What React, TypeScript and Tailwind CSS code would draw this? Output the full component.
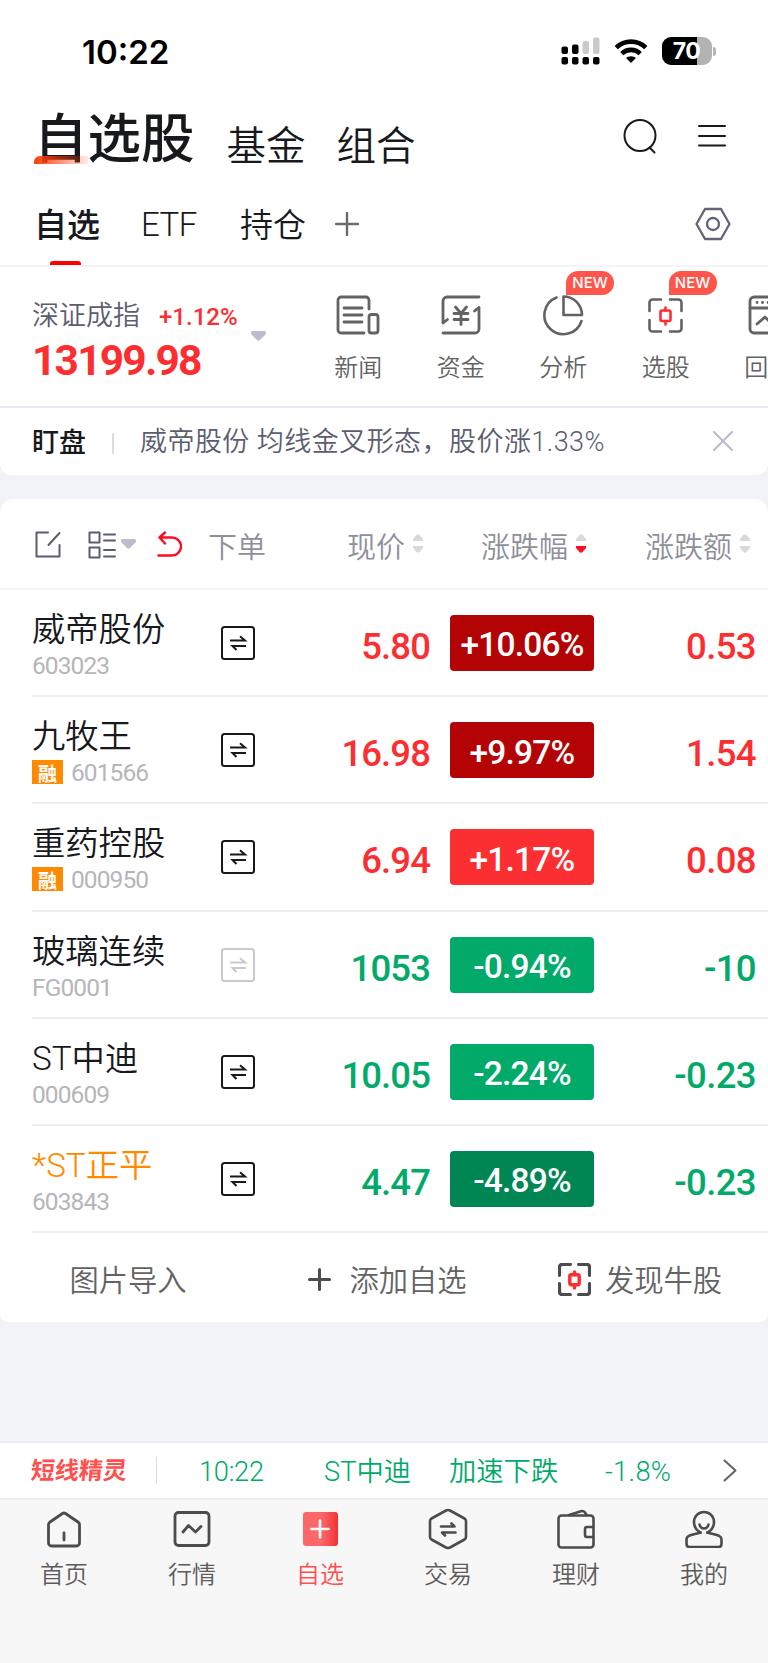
import type { ReactNode } from "react";
import clsx from "clsx";

type Stock = {
  name: string;
  code: string;
  margin?: boolean;
  st?: boolean;
  locked?: boolean;
  price: string;
  percent: string;
  change: string;
  color: string;
  badge: string;
};

const num = "font-['Roboto','Noto_Sans_CJK_SC',sans-serif]";

const stocks: Stock[] = [
  { name: "威帝股份", code: "603023", price: "5.80", percent: "+10.06%", change: "0.53", color: "text-[#fb2f31]", badge: "bg-[#b40304]" },
  { name: "九牧王", code: "601566", margin: true, price: "16.98", percent: "+9.97%", change: "1.54", color: "text-[#fb2f31]", badge: "bg-[#b40304]" },
  { name: "重药控股", code: "000950", margin: true, price: "6.94", percent: "+1.17%", change: "0.08", color: "text-[#fb2f31]", badge: "bg-[#fb2f31]" },
  { name: "玻璃连续", code: "FG0001", locked: true, price: "1053", percent: "-0.94%", change: "-10", color: "text-[#02aa6a]", badge: "bg-[#02aa6a]" },
  { name: "ST中迪", code: "000609", price: "10.05", percent: "-2.24%", change: "-0.23", color: "text-[#02aa6a]", badge: "bg-[#02aa6a]" },
  { name: "*ST正平", code: "603843", st: true, price: "4.47", percent: "-4.89%", change: "-0.23", color: "text-[#02aa6a]", badge: "bg-[#008653]" },
];

function Svg({ w, h, sw = 2, className, children }: { w: number; h: number; sw?: number; className?: string; children: ReactNode }) {
  return (
    <svg
      width={w}
      height={h}
      viewBox={`0 0 ${w} ${h}`}
      fill="none"
      stroke="currentColor"
      strokeWidth={sw}
      strokeLinecap="round"
      strokeLinejoin="round"
      className={clsx("block shrink-0", className)}
    >
      {children}
    </svg>
  );
}

function StatusBar() {
  return (
    <div className="flex h-[102px] items-center pl-[82px] pr-[52px]">
      <span className="mt-[2px] font-['Inter',sans-serif] text-[33px] leading-none font-semibold text-black">10:22</span>
      <div className="ml-auto flex items-center">
        <Svg w={39} h={28} className="text-black">
          <g fill="#000" stroke="none">
            <rect x="0.5" y="9.5" width="6.5" height="7.5" rx="2" />
            <rect x="11" y="7.5" width="6.5" height="9.5" rx="2" />
            <rect x="21.5" y="4" width="6.5" height="13" rx="2" fill="#cacaca" />
            <rect x="32" y="0.5" width="6.5" height="16.5" rx="2" fill="#cacaca" />
            <rect x="0.5" y="20" width="6.5" height="7.5" rx="2" />
            <rect x="11" y="20" width="6.5" height="7.5" rx="2" />
            <rect x="21.5" y="20" width="6.5" height="7.5" rx="2" />
            <rect x="32" y="20" width="6.5" height="7.5" rx="2" />
          </g>
        </Svg>
        <Svg w={34} h={25} className="ml-[14px] text-black" sw={4.6}>
          <g strokeLinecap="butt">
            <path d="M2.2 8.6 A 21.3 21.3 0 0 1 31.8 8.6" />
            <path d="M7.8 14.6 A 13.3 13.3 0 0 1 26.2 14.6" />
          </g>
          <path d="M17 17.2c-2 0-3.700.7-4.900 1.900l4.900 4.900 4.900-4.900c-1.200-1.200-2.900-1.900-4.900-1.900z" fill="#000" stroke="none" />
        </Svg>
        <div className="ml-[14px] flex h-[28px] w-[50px] items-center justify-center rounded-[9px] bg-[linear-gradient(90deg,#000_35px,#b3b3b3_35px)] pr-[1px] font-['Inter',sans-serif] text-[23px] font-bold tracking-[-0.5px] text-white">
          70
        </div>
        <div className="ml-[1px] h-[9px] w-[3px] rounded-r-full bg-[#b3b3b3]" />
      </div>
    </div>
  );
}

function Header() {
  return (
    <div className="flex h-[83px] items-start pl-[34px] text-[#18191d]">
      <h1 className="relative mt-px text-[53.5px] leading-[64px] font-medium">
        自选股
        <span className="absolute top-[53px] left-0 h-[8px] w-[54px] rounded-tl-[6px] bg-linear-to-r from-[#ff3a06] to-[#ff3a06]/10" />
      </h1>
      <span className="mt-[14px] ml-[32px] text-[39.5px] leading-[54px] font-[350]">基金</span>
      <span className="mt-[14px] ml-[31px] text-[39.5px] leading-[54px] font-[350]">组合</span>
      <Svg w={36} h={37} className="mt-[16px] ml-auto">
        <circle cx="17" cy="17.500" r="15.500" />
        <path d="M26.500 29.500l5 5" />
      </Svg>
      <Svg w={28} h={24} className="mt-[22px] mr-[42px] ml-[39px]">
        <path d="M1 2h26M1 12h26M1 21.500h26" />
      </Svg>
    </div>
  );
}

function Tabs() {
  return (
    <div className="flex h-[82px] items-center border-b-2 border-[#f4f4f6] pl-[34px] text-[33px] text-[#18191d]">
      <div className="relative flex h-full items-center pb-[3px] font-medium">
        自选
        <span className="absolute bottom-0 left-[16px] h-[4px] w-[31px] rounded-t-[3px] bg-[#fc0000]" />
      </div>
      <span className={clsx(num, "ml-[41px] font-[350] tracking-[-0.5px]")}>ETF</span>
      <span className="mb-[3px] ml-[43px] font-[350]">持仓</span>
      <Svg w={24} h={24} className="mb-[2px] ml-[29px] text-[#6b6b6b]" sw={2.4}>
        <path d="M12 1v22M1 12h22" />
      </Svg>
      <Svg w={36} h={34} className="mr-[37px] mb-[2px] ml-auto text-[#62647a]" sw={2.3}>
        <path d="M10 2h16l8.500 15L26 32H10L1.500 17z" />
        <circle cx="18" cy="17" r="6" />
      </Svg>
    </div>
  );
}

const scan = (
  <>
    <path d="M1.500 13V4.500a3 3 0 0 1 3-3H13M22 1.500h8.500a3 3 0 0 1 3 3V13M33.500 22v8.500a3 3 0 0 1-3 3H22M13 33.500H4.500a3 3 0 0 1-3-3V22" />
    <g stroke="#fb2f31">
      <rect x="12.500" y="12.500" width="10" height="10.500" rx="1.500" />
      <path d="M17.500 9.500v3M17.500 23v3.500" />
    </g>
  </>
);

const shortcuts: { label: string; isNew?: boolean; icon: ReactNode }[] = [
  {
    label: "新闻",
    icon: (
      <Svg w={44} h={40} sw={2.8}>
        <path d="M33 14V5a3 3 0 0 0-3-3H5a3 3 0 0 0-3 3v30a3 3 0 0 0 3 3h23M8 13h18M8 20h18M8 27h18" />
        <rect x="33" y="19.500" width="9" height="18.500" rx="2.500" />
      </Svg>
    ),
  },
  {
    label: "资金",
    icon: (
      <Svg w={40} h={40} sw={2.8}>
        <path d="M38 2H6a4 4 0 0 0-4 4v22l4.500-3.500M2 38h32a4 4 0 0 0 4-4V12.500L33.500 16" />
        <path d="M14.500 12l5.500 6.500L25.500 12M13 18.500h14M13 24.500h14M20 19v10.500" />
      </Svg>
    ),
  },
  {
    label: "分析",
    isNew: true,
    icon: (
      <Svg w={42} h={42} sw={2.6}>
        <path d="M14.500 3.500A19 19 0 1 0 39.500 27" />
        <path d="M21.500 2.500v18.500H40A18.500 18.500 0 0 0 21.500 2.500z" />
      </Svg>
    ),
  },
  { label: "选股", isNew: true, icon: <Svg w={35} h={35} sw={2.6}>{scan}</Svg> },
  {
    label: "回测",
    icon: (
      <Svg w={40} h={40} sw={2.8}>
        <rect x="2" y="2" width="36" height="36" rx="4" />
        <path d="M2 13h36M9 29l8-7 6 6 8-9" />
        <path d="M9 7.500h.1M14.500 7.500h.1M20 7.500h.1" />
      </Svg>
    ),
  },
];

function IndexBar() {
  return (
    <div className="flex h-[141px] overflow-hidden border-b-2 border-[#e8e9f2]">
      <div className="w-[307px] shrink-0 pt-[31px] pl-[32px]">
        <div className="flex h-[32px] items-center">
          <span className="text-[27px] leading-[32px] font-[350] text-[#5c5d70]">深证成指</span>
          <span className={clsx(num, "mt-[6px] ml-[19px] text-[24px] font-medium text-[#fb2f31]")}>+1.12%</span>
        </div>
        <div className="flex">
          <span className={clsx(num, "mt-[7px] w-[219px] text-[42.500px] leading-[48px] font-bold tracking-[-1.8px] text-[#fb2f31]")}>13199.98</span>
          <div className="mt-px">
            <Caret />
          </div>
        </div>
      </div>
      {shortcuts.map((s) => (
        <div key={s.label} className="relative flex w-[102.5px] shrink-0 flex-col items-center text-[#636363]">
          <div className="mt-[27px] flex h-[42px] items-center">{s.icon}</div>
          {s.isNew && (
            <span className="absolute top-[4px] left-[54px] flex h-[24px] w-[48px] items-center justify-center rounded-[12px] rounded-bl-none bg-[#ff564c] font-['Inter',sans-serif] text-[15px] font-medium text-white">
              NEW
            </span>
          )}
          <span className="mt-[14px] text-[24px] leading-[32px] font-[350]">{s.label}</span>
        </div>
      ))}
    </div>
  );
}

function Caret() {
  return (
    <svg width="15" height="10" viewBox="0 0 15 10" className="block shrink-0 fill-[#bbbccc]">
      <path d="M1.500 0h12q1.500 0 1.500 1.500v1.500L9 9q-1.500 1.300-3 0L0 3V1.500Q0 0 1.500 0z" />
    </svg>
  );
}

function Notice() {
  return (
    <div className="flex h-[67px] items-center pr-[35px] pb-px pl-[32px] text-[27px]">
      <span className="font-medium text-[#18191d]">盯盘</span>
      <span className="mt-[5px] ml-[26px] h-[21px] w-[2px] bg-[#dcdce2]" />
      <span className={clsx(num, "mt-[3px] ml-[26px] font-[350] tracking-[0.45px] text-[#5c5d70]")}>威帝股份 均线金叉形态，股价涨1.33%</span>
      <Svg w={20} h={20} className="ml-auto text-[#b9bacb]">
        <path d="M1 1l18 18M19 1L1 19" />
      </Svg>
    </div>
  );
}

function Sorter({ active }: { active?: boolean }) {
  return (
    <svg width="10" height="19" viewBox="0 0 10 19" className="ml-[8px] block">
      <path d="M0 7V5l3.500-4q1.500-1.500 3 0L10 5v2z" fill="#d9d9dc" />
      <path d="M0 12v2l3.500 4q1.500 1.300 3 0L10 14v-2z" fill={active ? "#fc0d22" : "#d9d9dc"} />
    </svg>
  );
}

function TableHead() {
  return (
    <div className="flex h-[91px] items-center border-b-2 border-[#f1f2f7] pr-[18px] pl-[35px] text-[29px] font-[350] text-[#8e8f9b]">
      <Svg w={26} h={27} className="mt-[2px] text-[#5c5d70]">
        <path d="M13 1.500H1.500V25.500H24.500V14M13.500 14L24.500 2" />
      </Svg>
      <Svg w={28} h={28} className="mt-[2px] ml-[27px] text-[#5c5d70]">
        <path d="M1.500 1.500h10v10h-10zM1.500 16.500h10v10h-10zM16 3.500h11M16 9.500h11M16 19h11M16 25.500h11" />
      </Svg>
      <div className="ml-[5px]">
        <Caret />
      </div>
      <Svg w={25} h={27} className="mt-[2px] ml-[21px] text-[#fc0d22]" sw={2.4}>
        <path d="M1.500 24.500H15a9 9 0 0 0 0-18H2.500M8 1.500l-5.500 5 5.500 6" />
      </Svg>
      <span className="mt-[4px] ml-[26px] w-[139px]">下单</span>
      <span className="mt-[4px]">现价</span>
      <Sorter />
      <span className="mt-[4px] ml-[58px]">涨跌幅</span>
      <Sorter active />
      <span className="mt-[4px] ml-auto">涨跌额</span>
      <Sorter />
    </div>
  );
}

function StockRow({ stock }: { stock: Stock }) {
  return (
    <div className="ml-[32px] flex h-[107.200px] border-b-2 border-[#edeef4]">
      <div className="w-[189px]">
        <div className={clsx(num, "mt-[19px] text-[33.300px] leading-[42px] font-[350]", stock.st ? "text-[#ff8a00]" : "text-[#18191d]")}>{stock.name}</div>
        <div className="mt-[2px] flex h-[24px] items-center">
          {stock.margin && (
            <span className="mr-[8px] flex h-[24px] w-[31px] items-center justify-center bg-[#ff8a00] text-[19px] leading-none font-bold text-white">融</span>
          )}
          <span className={clsx(num, "pt-[2px] text-[24.500px] leading-[24px] tracking-[-0.9px] text-[#b5b6ba]")}>{stock.code}</span>
        </div>
      </div>
      <Svg w={34} h={34} className={clsx("mt-[36px]", stock.locked ? "text-[#c9c9d6]" : "text-[#18191d]")}>
        <rect x="1" y="1" width="32" height="32" rx="2.500" />
        <g strokeLinecap="butt" strokeLinejoin="miter">
          <path d="M9 14.500h15l-5-4.300M25 20H11.500l4 4" />
        </g>
      </Svg>
      <span className={clsx(num, "mt-[34px] w-[175px] text-right text-[36.500px] leading-[46px] font-medium tracking-[-0.9px]", stock.color)}>{stock.price}</span>
      <div className={clsx(num, "mt-[25px] ml-[20px] flex h-[56px] w-[144px] items-center justify-center rounded-[4px] pt-[5px] text-[33.500px] font-medium tracking-[-0.8px] text-white", stock.badge)}>
        {stock.percent}
      </div>
      <span className={clsx(num, "mt-[34px] w-[162px] text-right text-[36.500px] leading-[46px] font-medium tracking-[-0.6px]", stock.color)}>{stock.change}</span>
    </div>
  );
}

function Actions() {
  return (
    <div className="grid h-[89px] grid-cols-3 pt-[3px] text-[29.300px] font-[350] text-[#636363]">
      <div className="flex items-center justify-center">图片导入</div>
      <div className="flex items-center justify-center gap-[18px] pl-[7px]">
        <Svg w={23} h={23} sw={3} className="text-[#4c4c4c]">
          <path d="M11.500 1.500v20M1.500 11.500h20" />
        </Svg>
        添加自选
      </div>
      <div className="flex items-center justify-center gap-[14px]">
        <Svg w={33} h={33} sw={3} className="text-[#4c4c4c]">
          <g transform="scale(0.943)" strokeWidth={3.6}>{scan}</g>
        </Svg>
        发现牛股
      </div>
    </div>
  );
}

function Ticker() {
  return (
    <div className={clsx(num, "flex h-[59px] items-center border-y-2 border-t-[#eaebf1] border-b-[#ececec] bg-white pr-[31px] pl-[31px] text-[27.300px] font-[350] text-[#02aa6a]")}>
      <span className="mt-px w-[125px] skew-x-[-5deg] text-[24px] font-bold text-[#ff4f4f]">短线精灵</span>
      <span className="h-[27px] w-[1px] bg-[#dcdce6]" />
      <span className="mt-[3px] ml-[42px] w-[125px] tracking-[-0.3px]">10:22</span>
      <span className="mt-[3px] w-[125px]">ST中迪</span>
      <span className="mt-[3px] w-[156px]">加速下跌</span>
      <span className="mt-[3px] tracking-[0.3px]">-1.8%</span>
      <Svg w={14} h={23} className="ml-auto text-[#636363]">
        <path d="M1.500 1.500L12.500 11.500 1.500 21.500" />
      </Svg>
    </div>
  );
}

const nav: { label: string; active?: boolean; icon: ReactNode }[] = [
  {
    label: "首页",
    icon: (
      <Svg w={36} h={38} sw={2.8}>
        <path d="M2.500 14.500Q2.500 13 4 12L16.500 3.500q1.500-1 3 0L32 12q1.500 1 1.500 2.500V33a3 3 0 0 1-3 3h-25a3 3 0 0 1-3-3zM18 23v7" />
      </Svg>
    ),
  },
  {
    label: "行情",
    icon: (
      <Svg w={38} h={38} sw={2.8}>
        <rect x="2" y="2.500" width="34" height="33" rx="3.500" />
        <path d="M10 22l5.500-6.500 7 6.500 5.500-5.500" />
      </Svg>
    ),
  },
  {
    label: "自选",
    active: true,
    icon: (
      <div className="flex h-[34px] w-[35px] items-center justify-center rounded-[3px] bg-linear-to-r from-[#fc686a] from-50% to-[#f23032]">
        <Svg w={20} h={20} className="text-white" sw={2.6}>
          <path d="M10 1.500v17M1.500 10h17" />
        </Svg>
      </div>
    ),
  },
  {
    label: "交易",
    icon: (
      <Svg w={40} h={42} sw={2.6}>
        <path d="M18 2.500q2-1 4 0l14.500 8q1.500 1 1.500 2.500v16q0 1.500-1.500 2.500L22 39.500q-2 1-4 0L3.500 31.500Q2 30.500 2 29V13q0-1.500 1.500-2.500z" />
        <path d="M13 18.500h13.500l-3-3M27.500 24.500H14l3 3" />
      </Svg>
    ),
  },
  {
    label: "理财",
    icon: (
      <Svg w={38} h={40} sw={2.6}>
        <rect x="1.500" y="6.500" width="35" height="32" rx="3" />
        <path d="M36 18h-6a2 2 0 0 0-2 2v6a2 2 0 0 0 2 2h6M12 6l12-3.800q2.500-.7 4 1.300L29.500 6" />
      </Svg>
    ),
  },
  {
    label: "我的",
    icon: (
      <Svg w={38} h={38} sw={2.6}>
        <path d="M15.500 22.500C7.500 25 1.500 25 1.500 29.500V34q0 3 3 3h29q3 0 3-3v-4.500c0-4.500-6-4.500-14-7" />
        <path d="M15.500 22.500C11 20 9 16.500 9 12a10 10 0 0 1 20 0c0 4.500-2 8-6.500 10.500M14.500 14.500q1 4 4.500 4t4.500-4" />
      </Svg>
    ),
  },
];

function BottomNav() {
  return (
    <div className="grid h-[163px] grid-cols-6 bg-[#f7f7f7]">
      {nav.map((n) => (
        <div key={n.label} className="flex flex-col items-center pt-[7px] text-[#4c4c4c]">
          <div className="flex h-[44px] items-center">{n.icon}</div>
          <span className={clsx("mt-[6px] text-[24px] leading-[32px] font-[350]", n.active ? "text-[#ff4f4f]" : "text-[#5c5c5c]")}>{n.label}</span>
        </div>
      ))}
    </div>
  );
}

export default function App() {
  return (
    <div className="flex h-[1663px] w-[768px] flex-col overflow-hidden bg-[#f2f3f8] font-['Noto_Sans_CJK_SC',sans-serif]">
      <div className="rounded-b-[12px] bg-white">
        <StatusBar />
        <Header />
        <Tabs />
        <IndexBar />
        <Notice />
      </div>
      <div className="mt-[24px] rounded-t-[14px] rounded-b-[8px] bg-white">
        <TableHead />
        {stocks.map((s) => (
          <StockRow key={s.code} stock={s} />
        ))}
        <Actions />
      </div>
      <div className="mt-auto">
        <Ticker />
        <BottomNav />
      </div>
    </div>
  );
}
